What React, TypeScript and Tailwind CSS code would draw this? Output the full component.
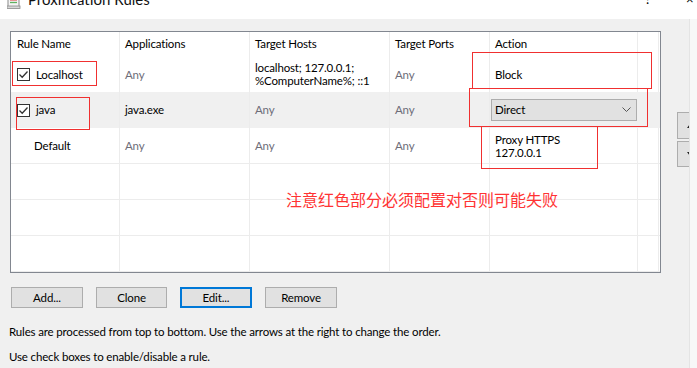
import React from "react";

const font = "font-['Lato',sans-serif]";

function Check() {
  return (
    <span className="inline-flex h-[13px] w-[13px] items-center justify-center border border-[#333] bg-white">
      <svg width="11" height="11" viewBox="0 0 11 11">
        <path d="M1.5 5.5 L4.2 8.2 L9.5 2.5" fill="none" stroke="#333" strokeWidth="1.3" />
      </svg>
    </span>
  );
}

const cols = "grid grid-cols-[109px_130px_140px_100px_148px_21px]";
const cell = "border-r border-[#ececec] px-[5px] flex items-center";

export default function App() {
  return (
    <div className={`relative h-[368px] w-[697px] overflow-hidden bg-[#f0f0f0] text-[11.5px] tracking-[-0.15px] text-[#000] ${font}`}>
      {/* title bar */}
      <div className="relative flex h-[19px] items-end bg-white">
        <svg className="ml-[7px] mb-[10px]" width="14" height="10" viewBox="0 0 14 10">
          <rect x="1" y="-4" width="11" height="12" fill="#f4f4f4" stroke="#8a8a8a" />
          <line x1="3" y1="1" x2="10" y2="1" stroke="#e06060" strokeWidth="1.3" />
          <line x1="3" y1="3.5" x2="10" y2="3.5" stroke="#60b060" strokeWidth="1.3" />
          <rect x="0" y="7" width="13" height="2.5" fill="#d8d8d8" stroke="#8a8a8a" strokeWidth="0.8" />
        </svg>
        <span className="absolute left-[28px] top-[-11px] text-[15px] leading-[20px] tracking-normal text-[#111]">Proxification Rules</span>
        <span className="absolute left-[645px] top-[-9px] text-[13px] leading-[16px]">?</span>
        <span className="absolute left-[686px] top-[-9px] text-[13px] leading-[16px]">×</span>
      </div>

      <div className="flex">
        <div className="w-[689px] overflow-hidden">
          <div className="flex pt-[12px]">
            {/* table */}
            <div className="ml-[10px] w-[651px] shrink-0 border border-[#828790] bg-white">
              <div className={`${cols} h-[24px]`}>
                <div className={cell}><span className="ml-[1px]">Rule Name</span></div>
                <div className={cell}>Applications</div>
                <div className={cell}>Target Hosts</div>
                <div className={cell}>Target Ports</div>
                <div className={cell}>Action</div>
                <div className={cell}></div>
              </div>
              {/* row 1 */}
              <div className={`${cols} h-[36px]`}>
                <div className={`${cell} gap-[6px]`}><span className="ml-[1px] flex"><Check /></span><span className="pt-[1px]">Localhost</span></div>
                <div className={`${cell} pt-[1px] text-[#6d6d78]`}>Any</div>
                <div className={`${cell} leading-[13px]`}>
                  <span>localhost; 127.0.0.1;<br />%ComputerName%; ::1</span>
                </div>
                <div className={`${cell} pt-[1px] text-[#6d6d78]`}>Any</div>
                <div className={`${cell} pt-[2px]`}>Block</div>
                <div className={cell}></div>
              </div>
              {/* row 2 */}
              <div className={`${cols} h-[36px] bg-[#f0f0f0]`}>
                <div className={`${cell} gap-[6px]`}><span className="ml-[1px] flex"><Check /></span>java</div>
                <div className={cell}>java.exe</div>
                <div className={`${cell} text-[#6d6d78]`}>Any</div>
                <div className={`${cell} text-[#6d6d78]`}>Any</div>
                <div className="flex items-center pl-[1px]">
                  <div className="flex h-[22px] w-[146px] items-center justify-between border border-[#adadad] bg-[#e1e1e1] pl-[3px] pr-[5px]">
                    <span>Direct</span>
                    <svg width="9" height="6" viewBox="0 0 9 6">
                      <path d="M0.5 0.5 L4.5 4.5 L8.5 0.5" fill="none" stroke="#555" strokeWidth="1" />
                    </svg>
                  </div>
                </div>
                <div></div>
              </div>
              {/* row 3 */}
              <div className={`${cols} h-[36px] border-b border-[#ececec]`}>
                <div className={cell}><span className="ml-[18px]">Default</span></div>
                <div className={`${cell} text-[#6d6d78]`}>Any</div>
                <div className={`${cell} text-[#6d6d78]`}>Any</div>
                <div className={`${cell} text-[#6d6d78]`}>Any</div>
                <div className={`${cell} leading-[13px]`}><span>Proxy HTTPS<br />127.0.0.1</span></div>
                <div className={cell}></div>
              </div>
              {[0, 1, 2].map((i) => (
                <div key={i} className={`${cols} h-[36px] border-b border-[#ececec]`}>
                  <div className={cell}></div>
                  <div className={cell}></div>
                  <div className={cell}></div>
                  <div className={cell}></div>
                  <div className={cell}></div>
                  <div className={cell}></div>
                </div>
              ))}
            </div>
            {/* order arrows */}
            <div className="ml-[16px] flex shrink-0 flex-col gap-[2px] pt-[81px]">
              <div className="relative h-[27px] w-[20px] border border-[#adadad] bg-[#e1e1e1]">
                <svg className="absolute left-[9px] top-[11px]" width="6" height="4" viewBox="0 0 6 4"><path d="M0 4 L3 0 L6 4Z" fill="#222" /></svg>
              </div>
              <div className="relative h-[26px] w-[20px] border border-[#adadad] bg-[#e1e1e1]">
                <svg className="absolute left-[9px] top-[10px]" width="6" height="4" viewBox="0 0 6 4"><path d="M0 0 L6 0 L3 4Z" fill="#222" /></svg>
              </div>
            </div>
          </div>

          {/* buttons */}
          <div className="ml-[11px] mt-[14px] flex gap-[13px]">
            <button className="h-[21px] w-[72px] border border-[#adadad] bg-[#e1e1e1]">Add...</button>
            <button className="h-[21px] w-[71px] border border-[#adadad] bg-[#e1e1e1]">Clone</button>
            <button className="h-[21px] w-[72px] border-2 border-[#0078d7] bg-[#e1e1e1]">Edit...</button>
            <button className="h-[21px] w-[72px] border border-[#adadad] bg-[#e1e1e1]">Remove</button>
          </div>

          <p className="ml-[9px] mt-[16px] leading-[16px]">Rules are processed from top to bottom. Use the arrows at the right to change the order.</p>
          <p className="ml-[9px] mt-[9px] leading-[16px]">Use check boxes to enable/disable a rule.</p>
        </div>
        <div className="h-[368px] w-[8px] border-l border-[#e4e4e4] bg-[#f7f7f7]"></div>
      </div>

      {/* annotations */}
      <div className="absolute left-[12px] top-[61px] h-[25px] w-[85px] border border-[#f03030]"></div>
      <div className="absolute left-[16px] top-[97px] h-[33px] w-[74px] border border-[#f03030]"></div>
      <div className="absolute left-[472px] top-[52px] h-[37px] w-[180px] border border-[#f03030]"></div>
      <div className="absolute left-[469px] top-[88px] h-[39px] w-[179px] border border-[#f03030]"></div>
      <div className="absolute left-[481px] top-[126px] h-[43px] w-[117px] border border-[#f03030]"></div>
      <div className="absolute left-[286px] top-[188px] font-['Noto_Sans_CJK_SC',sans-serif] text-[16px] leading-[22px] tracking-normal text-[#ff3333]">
        注意红色部分必须配置对否则可能失败
      </div>
    </div>
  );
}
